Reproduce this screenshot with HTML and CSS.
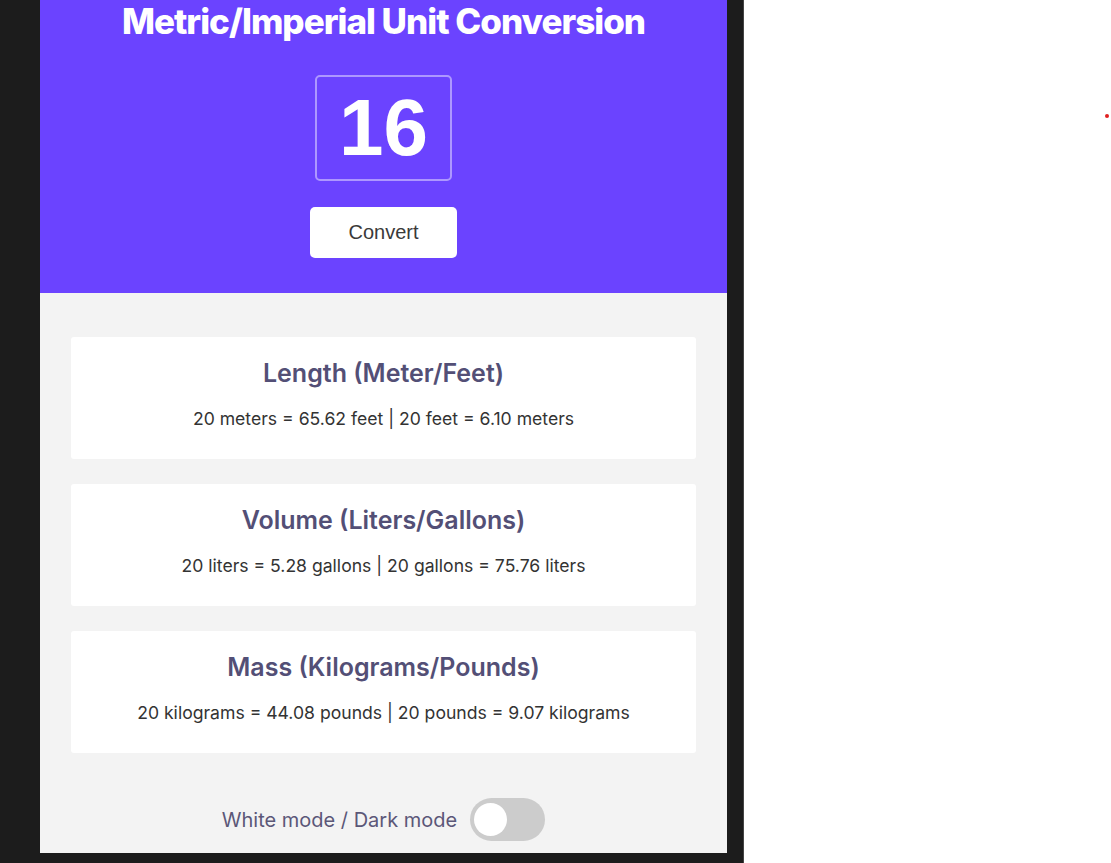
FILE: index.html
```html
<!DOCTYPE html>
<html lang="en">
<head>
<meta charset="utf-8">
<title>Metric/Imperial Unit Conversion</title>
<link rel="stylesheet" href="styles.css">
</head>
<body>
<div class="layout">
  <div class="pane">
    <div class="app">
      <header class="hero">
        <h1 class="hero-title">Metric/Imperial Unit Conversion</h1>
        <div class="num-box">16</div>
        <button class="convert-btn">Convert</button>
      </header>
      <section class="results">
        <div class="result-card">
          <h2 class="result-title">Length (Meter/Feet)</h2>
          <p class="result-text">20 meters = 65.62 feet | 20 feet = 6.10 meters</p>
        </div>
        <div class="result-card">
          <h2 class="result-title">Volume (Liters/Gallons)</h2>
          <p class="result-text">20 liters = 5.28 gallons | 20 gallons = 75.76 liters</p>
        </div>
        <div class="result-card">
          <h2 class="result-title">Mass (Kilograms/Pounds)</h2>
          <p class="result-text">20 kilograms = 44.08 pounds | 20 pounds = 9.07 kilograms</p>
        </div>
        <div class="mode-row">
          <span class="mode-label">White mode / Dark mode</span>
          <span class="switch"><span class="knob"></span></span>
        </div>
      </section>
    </div>
  </div>
  <div class="side">
    <span class="dot"></span>
  </div>
</div>
</body>
</html>
```

FILE: styles.css
```css
* { box-sizing: border-box; }
html, body { margin: 0; padding: 0; height: 100%; }
body {
  font-family: Inter, "Noto Sans", sans-serif;
  background: #ffffff;
  overflow: hidden;
}
.layout {
  display: flex;
  height: 863px;
}
.pane {
  width: 744px;
  background: #1c1c1c;
  border-right: 1px solid #444444;
  padding-left: 40px;
}
.app {
  width: 687px;
}
.hero {
  background: #6b43ff;
  display: flex;
  flex-direction: column;
  align-items: center;
  padding: 0 0 35px;
}
.hero-title {
  margin: 0;
  color: #ffffff;
  font-family: Inter, sans-serif;
  font-weight: 800;
  font-size: 35px;
  line-height: 42px;
  letter-spacing: -1px;
}
.num-box {
  margin-top: 33px;
  width: 137px;
  height: 106px;
  border: 2px solid rgba(255, 255, 255, 0.45);
  border-radius: 5px;
  color: #ffffff;
  font-family: "Liberation Sans", Arial, sans-serif;
  font-weight: 700;
  font-size: 80px;
  display: flex;
  align-items: center;
  justify-content: center;
}
.convert-btn {
  margin-top: 26px;
  width: 147px;
  height: 51px;
  border: none;
  border-radius: 5px;
  background: #ffffff;
  color: #3a3a3a;
  font-family: "Liberation Sans", Arial, sans-serif;
  font-size: 20px;
}
.results {
  background: #f3f3f3;
  padding: 44px 31px 0;
  height: 560px;
  display: flex;
  flex-direction: column;
  gap: 25px;
}
.result-card {
  background: #ffffff;
  border-radius: 3px;
  height: 122px;
  display: flex;
  flex-direction: column;
  align-items: center;
  padding-top: 21px;
}
.result-title {
  margin: 0;
  color: #534f76;
  font-weight: 600;
  font-size: 25px;
  line-height: 30px;
}
.result-text {
  margin: 21px 0 0;
  color: #333333;
  font-size: 17.6px;
  line-height: 20px;
}
.mode-row {
  margin-top: 20px;
  display: flex;
  align-items: center;
  justify-content: center;
  gap: 13px;
}
.mode-label {
  color: #5b5778;
  font-size: 20px;
}
.switch {
  width: 75px;
  height: 43px;
  border-radius: 22px;
  background: #cccccc;
  display: flex;
  align-items: center;
  padding-left: 4px;
}
.knob {
  width: 33px;
  height: 33px;
  border-radius: 50%;
  background: #ffffff;
}
.side {
  flex: 1;
  position: relative;
}
.dot {
  position: absolute;
  left: 361px;
  top: 114px;
  width: 4px;
  height: 4px;
  border-radius: 50%;
  background: #e02020;
}
```
